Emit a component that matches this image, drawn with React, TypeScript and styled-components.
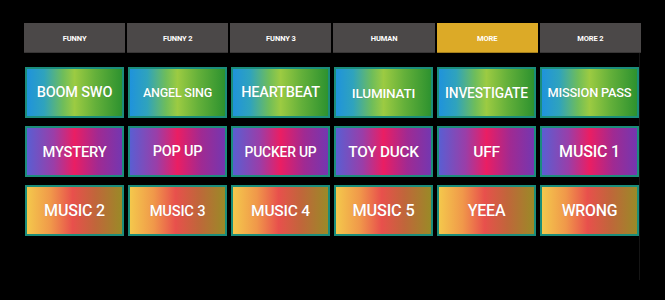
import React from "react";
import styled, { createGlobalStyle } from "styled-components";

const Global = createGlobalStyle`
  html, body { margin: 0; padding: 0; background: #000; }
  body { font-family: Roboto, "Noto Sans", sans-serif; }
`;

const Page = styled.div`
  width: 665px;
  height: 300px;
  background: #000;
  padding: 23px 24px 0 24px;
  box-sizing: border-box;
`;

const Tabs = styled.div`
  display: grid;
  grid-template-columns: repeat(6, 1fr);
  gap: 2px;
  width: 617px;
  height: 30px;
`;

const Tab = styled.div<{ $active?: boolean }>`
  background: ${(p) => (p.$active ? "#dcaa27" : "#4b4848")};
  color: #fff;
  font-size: 7.5px;
  font-weight: 700;
  display: flex;
  align-items: center;
  justify-content: center;
  letter-spacing: -0.1px;
  box-shadow: inset 0 -1px 0 rgba(0, 0, 0, 0.25);
`;

const Board = styled.div`
  width: 616px;
  height: 227px;
  box-sizing: border-box;
  padding: 14px 0 0 1px;
  border-right: 1px solid #151515;
`;

const Grid = styled.div`
  display: grid;
  grid-template-columns: repeat(6, 1fr);
  grid-auto-rows: 51px;
  column-gap: 4px;
  row-gap: 8px;
`;

const gradients: Record<string, string> = {
  green:
    "linear-gradient(90deg, #1f93dc 0%, #2fa3bd 18%, #6fbd5a 38%, #9ccb42 50%, #64b03a 72%, #2d922f 100%)",
  pink:
    "linear-gradient(90deg, #5a5ed2 0%, #9a3ea8 28%, #ea1e63 50%, #a02a92 75%, #7437b0 100%)",
  orange:
    "linear-gradient(90deg, #f4c84c 0%, #f0984a 25%, #e8504c 48%, #c0663a 72%, #9a8a27 100%)",
};

const Pad = styled.div<{ $tone: string; $size: number }>`
  background: ${(p) => gradients[p.$tone]};
  border: 2px solid #1b8d7b;
  box-sizing: border-box;
  color: #fff;
  font-size: ${(p) => p.$size}px;
  font-weight: 500;
  display: flex;
  align-items: center;
  justify-content: center;
  white-space: nowrap;
  letter-spacing: -0.2px;
  text-shadow: 0 0 1px rgba(0, 0, 0, 0.15);
`;

const tabs = ["FUNNY", "FUNNY 2", "FUNNY 3", "HUMAN", "MORE", "MORE 2"];

type Item = [string, number];

const rows: { tone: string; items: Item[] }[] = [
  {
    tone: "green",
    items: [
      ["BOOM SWO", 14.5],
      ["ANGEL SING", 12.5],
      ["HEARTBEAT", 14.5],
      ["ILUMINATI", 13.5],
      ["INVESTIGATE", 13.8],
      ["MISSION PASS", 12.8],
    ],
  },
  {
    tone: "pink",
    items: [
      ["MYSTERY", 14.7],
      ["POP UP", 14.5],
      ["PUCKER UP", 13.9],
      ["TOY DUCK", 15.3],
      ["UFF", 15.5],
      ["MUSIC 1", 16],
    ],
  },
  {
    tone: "orange",
    items: [
      ["MUSIC 2", 16],
      ["MUSIC 3", 14.7],
      ["MUSIC 4", 15.5],
      ["MUSIC 5", 16.3],
      ["YEEA", 16],
      ["WRONG", 15.8],
    ],
  },
];

export default function App() {
  return (
    <>
      <Global />
      <Page>
        <Tabs>
          {tabs.map((t) => (
            <Tab key={t} $active={t === "MORE"}>
              {t}
            </Tab>
          ))}
        </Tabs>
        <Board>
          <Grid>
            {rows.map((r) =>
              r.items.map(([label, size]) => (
                <Pad key={label} $tone={r.tone} $size={size}>
                  {label}
                </Pad>
              ))
            )}
          </Grid>
        </Board>
      </Page>
    </>
  );
}
